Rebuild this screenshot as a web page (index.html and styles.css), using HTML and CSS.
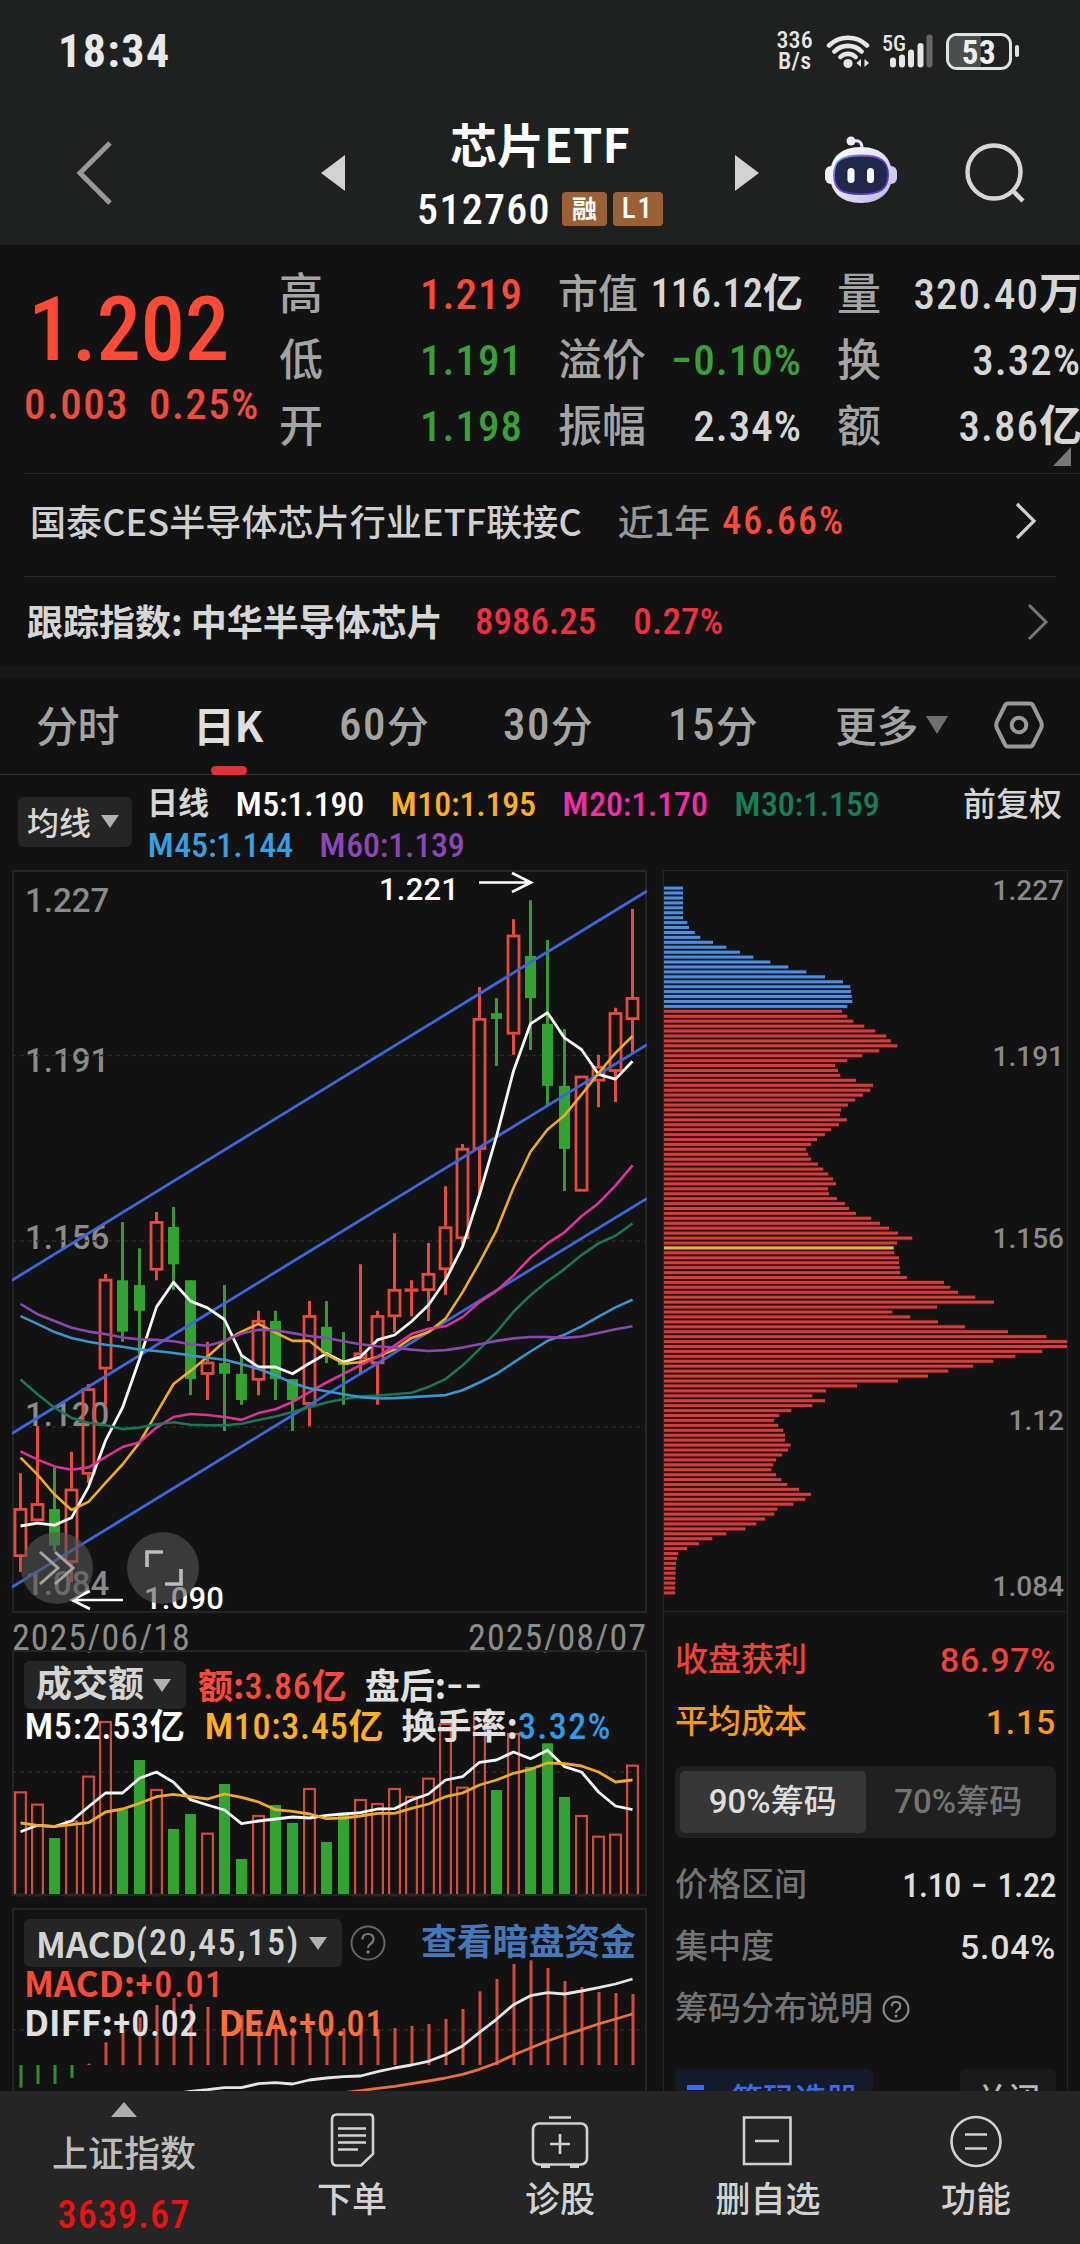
FILE: index.html
```html
<!DOCTYPE html>
<html lang="zh-CN">
<head>
<meta charset="utf-8">
<title>芯片ETF 512760</title>
<link rel="stylesheet" href="styles.css">
</head>
<body>
<header class="header">
  <div class="status">
    <span class="clock">18:34</span>
    <span class="net-speed">336<br>B/s</span>
    <svg class="wifi" width="45" height="36" viewBox="0 0 45 36">
      <g fill="none" stroke="#e6e6e6" stroke-width="4.6" stroke-linecap="round"><path d="M3 12.500a27 27 0 0 1 38 0M8.500 18.500a19 19 0 0 1 27 0M14.500 24a10.500 10.500 0 0 1 15 0"/></g>
      <circle cx="22" cy="30.500" r="4.600" fill="#e6e6e6"/><path d="M35 26v8l-4.500-4zM38.500 26v8l4.500-4z" fill="#e6e6e6"/>
    </svg>
    <svg class="signal" width="52" height="36" viewBox="0 0 52 36">
      <g stroke-width="6" stroke-linecap="round" stroke="#e6e6e6"><path d="M11 27.500v4M20 24.500v7M29 19.500v12M38.500 13v18.500"/><path d="M47.500 4.500v27" stroke="#666"/></g>
      <text x="0" y="18" class="signal-text" textLength="24" lengthAdjust="spacingAndGlyphs">5G</text>
    </svg>
    <span class="battery"><i class="battery-fill"></i><b>53</b></span><i class="battery-tip"></i>
  </div>
  <div class="titlebar">
    <svg class="back" width="40" height="66" viewBox="0 0 40 66"><path d="M35 3L5 33l30 30" fill="none" stroke="#999" stroke-width="5"/></svg>
    <svg class="prev" width="24" height="36" viewBox="0 0 24 36"><path d="M24 0v36L0 18z" fill="#d2d2d2"/></svg>
    <div class="title">
      <h1>芯片ETF</h1>
      <div class="code"><span class="num">512760</span><span class="badge">融</span><span class="badge badge-l1">L1</span></div>
    </div>
    <svg class="next" width="24" height="36" viewBox="0 0 24 36"><path d="M0 0v36l24-18z" fill="#d2d2d2"/></svg>
    <svg class="robot" width="72" height="68" viewBox="0 0 72 68">
      <defs>
        <linearGradient id="shell" x1="0" y1="0" x2="1" y2="1"><stop offset="0" stop-color="#fff"/><stop offset=".5" stop-color="#e6e2f8"/><stop offset="1" stop-color="#b9b2f0"/></linearGradient>
        <linearGradient id="rim" x1="0" y1="0" x2="1" y2="1"><stop offset="0" stop-color="#59b8e8"/><stop offset=".4" stop-color="#8a3fd8"/><stop offset=".7" stop-color="#3a35c8"/><stop offset="1" stop-color="#7a40e0"/></linearGradient>
      </defs>
      <path d="M27 5.500q10-3 10 7" fill="none" stroke="#e8e4fa" stroke-width="3"/><circle cx="26" cy="5" r="4.500" fill="#eeeafc"/>
      <rect x="0" y="30" width="12" height="18" rx="6" fill="#f1eefc"/><rect x="60" y="30" width="12" height="18" rx="6" fill="#cfc9f6"/>
      <path d="M36 11c21 0 31 12 31 28S56 67 36 67 5 56 5 39 15 11 36 11z" fill="url(#shell)"/>
      <path d="M36 19.500c19 0 27 5 27 19.500S55 58 36 58 9 54 9 39s8-19.500 27-19.500z" fill="#202849" stroke="url(#rim)" stroke-width="1.800"/>
      <rect x="22.500" y="32" width="7" height="15" rx="3.500" fill="#fff"/><rect x="42" y="32" width="7" height="15" rx="3.500" fill="#fff"/>
    </svg>
    <svg class="search" width="64" height="64" viewBox="0 0 64 64"><circle cx="29" cy="30" r="26.500" fill="none" stroke="#d6d6d6" stroke-width="4.400"/><path d="M48 49l10 10" stroke="#d6d6d6" stroke-width="4.500"/></svg>
  </div>
</header>

<main class="content">
  <section class="quote">
    <div class="last">
      <div class="price num">1.202</div>
      <div class="change num"><span>0.003</span><span>0.25%</span></div>
    </div>
    <dl class="stats">
      <div><dt>高</dt><dd class="up">1.219</dd></div>
      <div><dt>低</dt><dd class="down">1.191</dd></div>
      <div><dt>开</dt><dd class="down">1.198</dd></div>
    </dl>
    <dl class="stats">
      <div class="tight"><dt>市值</dt><dd>116.12<b>亿</b></dd></div>
      <div><dt>溢价</dt><dd class="down">−0.10%</dd></div>
      <div><dt>振幅</dt><dd>2.34%</dd></div>
    </dl>
    <dl class="stats">
      <div><dt>量</dt><dd>320.40<b>万</b></dd></div>
      <div><dt>换</dt><dd>3.32%</dd></div>
      <div><dt>额</dt><dd>3.86<b>亿</b></dd></div>
    </dl>
    <i class="more-corner"></i>
  </section>

  <section class="link-row fund">
    <span>国泰CES半导体芯片行业ETF联接C</span><span class="period">近1年</span><span class="num up">46.66%</span>
    <svg class="chev" width="22" height="40" viewBox="0 0 22 40"><path d="M2 3l17 17L2 37" fill="none" stroke="#d0d0d0" stroke-width="3.200"/></svg>
  </section>
  <section class="link-row index">
    <span>跟踪指数: 中华半导体芯片</span><span class="num">8986.25</span><span class="num">0.27%</span>
    <svg class="chev" width="22" height="40" viewBox="0 0 22 40"><path d="M2 3l17 17L2 37" fill="none" stroke="#777" stroke-width="3"/></svg>
  </section>

  <nav class="tabs">
    <span class="tab t1">分时</span>
    <span class="tab t2 active">日K</span>
    <span class="tab t3"><em>60</em>分</span>
    <span class="tab t4"><em>30</em>分</span>
    <span class="tab t5"><em>15</em>分</span>
    <span class="tab t6">更多<i class="caret"></i></span>
    <svg class="gear" width="50" height="48" viewBox="0 0 50 48"><path d="M14 2.500h22q2 0 3 2l8 16q1.500 3.500 0 7l-8 16q-1 2-3 2H14q-2 0-3-2l-8-16q-1.500-3.500 0-7l8-16q1-2 3-2z" fill="none" stroke="#999" stroke-width="4"/><circle cx="25" cy="24" r="7.300" fill="none" stroke="#999" stroke-width="4"/></svg>
  </nav>

  <section class="legend">
    <span class="pill ma-pill">均线<i class="caret"></i></span>
    <div class="ma">
      <div><span class="day">日线</span><span class="m5"><b>M</b>5:1.190</span><span class="m10"><b>M</b>10:1.195</span><span class="m20"><b>M</b>20:1.170</span><span class="m30"><b>M</b>30:1.159</span></div>
      <div><span class="m45"><b>M</b>45:1.144</span><span class="m60"><b>M</b>60:1.139</span></div>
    </div>
    <span class="adjust">前复权</span>
  </section>

  <div class="panels">
    <div class="left">
      <div class="kline">
        <div class="axis kaxis"><span>1.227</span><span>1.191</span><span>1.156</span><span>1.120</span><span>1.084</span></div>
        <svg id="kline" width="635" height="743" viewBox="12 870 635 743"></svg>
        <span class="mark mark-high">1.221</span>
        <span class="mark mark-low">1.090</span>
        <span class="round round-a"><svg width="72" height="72" viewBox="0 0 72 72"><path d="M19 20l18 16-18 16M34 20l18 16-18 16" fill="none" stroke="#a5a5a5" stroke-width="3"/></svg></span>
        <span class="round round-b"><svg width="72" height="72" viewBox="0 0 72 72"><path d="M20 35V20h16M38 52h16V37" fill="none" stroke="#bbb" stroke-width="3.600"/></svg></span>
      </div>
      <div class="dates"><span>2025/06/18</span><span>2025/08/07</span></div>
      <div class="sub volume">
        <svg id="volume" width="635" height="247" viewBox="12 1650 635 247"></svg>
        <div class="sub-head">
          <div class="line"><span class="pill vol-pill">成交额<i class="caret"></i></span><span class="v-amt"><b>额:</b>3.86<b>亿</b></span><span class="v-after"><b>盘后:</b>−−</span></div>
          <div class="line line2"><span><b>M</b>5:2.53<b>亿</b></span><span class="m10 v-m10"><b>M</b>10:3.45<b>亿</b></span><span class="v-rate"><b>换手率:</b><em>3.32%</em></span></div>
        </div>
      </div>
      <div class="sub macd">
        <svg id="macd" width="635" height="190" viewBox="12 1908 635 190"></svg>
        <div class="sub-head">
          <div class="line"><span class="pill"><b>MACD</b>(20,45,15)<i class="caret"></i></span>
            <svg class="help" width="36" height="36" viewBox="0 0 36 36"><circle cx="18" cy="18" r="16.500" fill="none" stroke="#666" stroke-width="2"/><path d="M12.500 14.500q0-5.500 5.500-5.500t5.500 5q0 3-3 5-2.500 1.500-2.500 4" fill="none" stroke="#777" stroke-width="2.200"/><circle cx="18" cy="27" r="1.800" fill="#777"/></svg>
            <span class="dark-pool">查看暗盘资金</span></div>
          <div class="line line2"><span class="macd-v"><b>MACD:</b>+0.01</span></div>
          <div class="line line3"><span><b>DIFF:</b>+0.02</span><span class="dea"><b>DEA:</b>+0.01</span></div>
        </div>
      </div>
    </div>

    <div class="chips">
      <div class="chip-chart">
        <svg id="chips" width="403" height="741" viewBox="664 871 403 741"></svg>
        <div class="axis caxis"><span>1.227</span><span>1.191</span><span>1.156</span><span>1.12</span><span>1.084</span></div>
      </div>
      <div class="chip-info">
        <div class="row profit"><span>收盘获利</span><span>86.97%</span></div>
        <div class="row cost"><span>平均成本</span><span>1.15</span></div>
        <div class="toggle"><span class="on">90%筹码</span><span>70%筹码</span></div>
        <div class="row"><span>价格区间</span><span class="num range">1.10 − 1.22</span></div>
        <div class="row"><span>集中度</span><span>5.04%</span></div>
        <div class="row"><span class="explain">筹码分布说明<svg width="28" height="28" viewBox="0 0 36 36"><circle cx="18" cy="18" r="16" fill="none" stroke="#888" stroke-width="2.800"/><path d="M12.500 14.500q0-5.500 5.500-5.500t5.500 5q0 3-3 5-2.500 1.500-2.500 4" fill="none" stroke="#888" stroke-width="2.800"/><circle cx="18" cy="27" r="2" fill="#888"/></svg></span></div>
        <div class="buttons">
          <span class="btn pick"><svg width="20" height="30" viewBox="0 0 20 30"><path d="M0 2.500h17M0 11h12M0 20h17" stroke="#3f6be8" stroke-width="5"/></svg>筹码选股</span>
          <span class="btn close">关闭</span>
        </div>
      </div>
    </div>
  </div>
</main>

<footer class="nav">
  <div class="nav-index"><i class="up-caret"></i><span>上证指数</span><b>3639.67</b></div>
  <div class="nav-item"><svg width="60" height="56" viewBox="0 0 60 56"><g fill="none" stroke="#d2d2d2" stroke-width="2.600"><path d="M11 2.500h34q3 0 3 4V42L36 53.500H12q-5 0-5-5v-41q0-5 5-5z" transform="translate(3 0)"/><path d="M16 16.500h28M16 23.500h28M16 30.500h28M16 37.500h20"/></g></svg><span>下单</span></div>
  <div class="nav-item"><svg width="60" height="56" viewBox="0 0 60 56"><g fill="none" stroke="#d2d2d2" stroke-width="2.600"><rect x="3" y="11.500" width="54" height="41" rx="6"/><path d="M19 5.500h22M30 22v20M20 32h20"/><path d="M11 54.500h9M40 54.500h9" stroke-width="3"/></g></svg><span>诊股</span></div>
  <div class="nav-item"><svg width="60" height="56" viewBox="0 0 60 56"><g fill="none" stroke="#d2d2d2" stroke-width="2.600"><path d="M6 5.500h46.500v46.500H6zM17 29h24"/></g></svg><span>删自选</span></div>
  <div class="nav-item"><svg width="60" height="56" viewBox="0 0 60 56"><g fill="none" stroke="#d2d2d2" stroke-width="2.600"><circle cx="30" cy="29.500" r="24.500"/><path d="M19 22.500h22M19 36.500h22"/></g></svg><span>功能</span></div>
</footer>
<script src="charts.js"></script>
</body>
</html>
```
FILE: charts.js
```js
const RED = '#e64c3c', GREEN = '#31a331', GRID = '#2a2a2a';
const STEP = 17, FIRST = 20.5;
const xAt = i => FIRST + i * STEP;
const r1 = v => Math.round(v * 10) / 10;

function polyline(values, yOf, color, width, start = 0) {
  const pts = values.map((v, i) => xAt(i + start) + ',' + r1(yOf(v))).join(' ');
  return `<polyline points="${pts}" fill="none" stroke="${color}" stroke-width="${width}" stroke-linejoin="round"/>`;
}
function dashed(y) {
  return `<line x1="12" x2="647" y1="${y}" y2="${y}" stroke="${GRID}" stroke-width="1.4" stroke-dasharray="4 4"/>`;
}

/* Daily candles: colour, high, body top, body bottom, low */
const candles = [
  ['r',1265,1337,1438,1469],['r',1168,1327,1364,1364],['g',1253,1339,1414,1426],['r',1221,1297,1450,1490],
  ['r',1081,1090,1268,1285],['r',854,864,1051,1124],['g',747,867,973,994],['g',801,877,930,1020],
  ['r',726,745,847,867],['g',716,757,834,887],['g',867,867,1071,1104],['r',994,1035,1062,1114],
  ['g',877,1038,1060,1178],['g',1024,1060,1114,1124],['r',930,949,1074,1104],['g',930,951,1071,1114],
  ['g',1071,1071,1114,1178],['r',910,939,1124,1168],['g',910,963,1018,1038],['g',974,1036,1042,1124],
  ['r',834,1016,1030,1060],['r',930,939,1040,1124],['r',770,885,943,974],['r',867,884,890,941],
  ['r',790,852,889,951],['r',673,756,846,897],['r',586,594,782,792],['r',262,326,598,690],
  ['g',285,316,328,425],['r',122,154,360,402],['g',83,198,285,392],['g',165,338,466,508],
  ['g',349,466,596,683],['r',445,445,684,684],['r',402,425,457,510],['r',305,314,437,499],['r',101,283,330,400]
];
const averages = [
  ['#f8f8f8',2.8,[1374,1368,1372,1357,1293,1198,1130,1030,922,871,910,924,948,1022,1046,1046,1060,1038,1018,1036,1025,990,980,952,918,867,798,690,570,435,338,315,367,391,442,452,415]],
  ['#f0aa28',2.6,[1233,1268,1309,1341,1324,1285,1247,1202,1141,1081,1054,1025,993,973,957,975,992,992,1020,1039,1036,1025,1010,986,974,946,892,830,764,676,602,556,527,484,440,398,363]],
  ['#dc3399',2.6,[1220,1237,1251,1258,1253,1232,1211,1201,1171,1149,1143,1145,1149,1155,1141,1133,1118,1098,1078,1060,1042,1025,1002,978,967,962,943,912,889,857,820,791,768,735,708,672,630]],
  ['#18765a',2.6,[1072,1102,1130,1151,1161,1166,1174,1171,1164,1160,1165,1166,1166,1163,1155,1148,1139,1129,1119,1112,1107,1105,1102,1099,1087,1071,1043,1009,974,932,898,869,844,815,791,775,750]],
  ['#3795d0',2.6,[941,957,974,986,994,1000,1004,1010,1013,1017,1022,1027,1031,1040,1050,1063,1079,1090,1096,1102,1108,1111,1110,1108,1106,1104,1094,1078,1060,1037,1014,992,979,962,942,923,907]],
  ['#8848b0',2.6,[916,937,951,965,973,978,985,989,990,993,999,1002,992,977,969,970,976,982,986,993,999,1003,1006,1010,1013,1011,1006,999,992,987,984,984,986,983,976,968,962]]
];
const kY = v => 860 + v / 2.063;

function drawKline() {
  let s = dashed(1055.5) + dashed(1241) + dashed(1427);
  candles.forEach(([c, hi, top, bot, lo], i) => {
    const x = xAt(i), t = kY(top), b = kY(bot);
    if (c === 'g') {
      s += `<rect x="${x - 1.5}" y="${kY(hi)}" width="3" height="${kY(lo) - kY(hi)}" fill="#3b963a"/>`;
      s += `<rect x="${x - 5.5}" y="${t}" width="11" height="${b - t}" fill="${GREEN}"/>`;
    } else {
      s += `<path d="M${x} ${kY(hi)}V${t}M${x} ${b}V${kY(lo)}" stroke="${RED}" stroke-width="3"/>`;
      s += `<rect x="${x - 5.5}" y="${t + 1.3}" width="11" height="${Math.max(b - t - 2.6, .6)}" fill="none" stroke="${RED}" stroke-width="2.8"/>`;
    }
  });
  [[867, 64], [1183, 381], [1500, 698]].forEach(([a, b]) => {
    s += `<line x1="12" y1="${kY(a)}" x2="647" y2="${kY(b)}" stroke="#3c66dd" stroke-width="2.8"/>`;
  });
  averages.forEach(([c, w, v]) => { s += polyline(v, kY, c, w); });
  s += '<path d="M479 882.500h52M512 873l19 9.500-19 9.500M123 1600H72M90 1591l-18 9 18 9" fill="none" stroke="#fff" stroke-width="2.600"/>';
  document.getElementById('kline').innerHTML = s;
}

const volumes = [577,614,714,664,530,366,628,480,570,687,642,701,552,777,648,615,669,567,726,638,600,612,567,591,536,372,563,340,570,402,501,430,591,648,710,704,497];
const volumeColors = 'rrgrrrggrggrggrggrggrrrrrrrrgrgggrrrr';
const volM5 = [695,676,680,663,620,579,579,535,516,547,599,615,630,671,663,657,651,654,646,642,638,627,626,600,582,540,530,487,480,456,476,451,500,516,576,618,629];
const volM10 = [669,676,679,674,668,636,627,610,590,583,590,597,582,592,606,629,634,642,656,654,648,640,640,625,612,590,579,555,540,520,508,489,491,498,516,546,540];
const pY = v => 1600 + v / 3;

function drawVolume() {
  let s = dashed(1772);
  volumes.forEach((v, i) => {
    const x = xAt(i), y = pY(v);
    s += volumeColors[i] === 'g'
      ? `<rect x="${x - 5.5}" y="${y}" width="11" height="${1895 - y}" fill="${GREEN}"/>`
      : `<rect x="${x - 5.4}" y="${y}" width="10.8" height="${1895 - y}" fill="none" stroke="#d44a3b" stroke-width="2.2"/>`;
  });
  s += polyline(volM5, pY, '#f8f8f8', 2.8) + polyline(volM10, pY, '#f0aa28', 2.8);
  document.getElementById('volume').innerHTML = s;
}

const macdBars = [1463,1452,1452,1434,1391,1327,1290,1252,1215,1194,1212,1221,1232,1245,1260,1270,1284,1281,1285,1285,1287,1288,1284,1278,1272,1257,1227,1174,1137,1092,1081,1104,1143,1161,1176,1179,1182];
const diff = [1482,1474,1469,1463,1463,1451,1448,1452,1440,1434,1430,1428,1415,1404,1395,1384,1364,1338,1297,1258,1214,1187,1178,1182,1173,1163,1152,1137];
const dea = [1478,1472,1465,1459,1451,1443,1434,1423,1408,1389,1365,1344,1323,1305,1289,1272,1257,1242];

function drawMacd() {
  let s = dashed(2030);
  macdBars.forEach((v, i) => {
    s += `<line x1="${xAt(i) + .5}" x2="${xAt(i) + .5}" y1="2065" y2="${pY(v)}" stroke="${v > 1395 ? '#348a30' : '#d24a3b'}" stroke-width="3"/>`;
  });
  s += polyline(diff, pY, '#e6e6e6', 2.8, 9) + polyline(dea, pY, '#e8703c', 2.8, 19);
  document.getElementById('macd').innerHTML = s;
}

/* Chip distribution: bar lengths from the highest price to the lowest */
const chips = [98,98,98,98,98,98,98,111,116,133,150,188,228,269,309,360,414,468,524,578,600,602,604,606,591,
  575,591,609,642,675,708,722,741,687,636,591,555,563,570,617,668,660,638,615,593,572,569,590,566,542,524,500,482,467,474,482,503,519,534,548,557,533,536,560,584,596,617,663,689,716,743,786,740,730,
  732,746,746,748,750,770,881,899,923,975,1031,860,726,780,863,944,1073,1188,1250,1251,1176,1095,1029,968,894,833,743,620,527,486,524,486,423,387,371,384,399,404,404,421,413,395,377,369,363,377,393,411,446,482,465,429,381,372,344,318,285,228,186,146,110,84,80,77,76,76,75,75,75,75];

function drawChips() {
  let s = '';
  chips.forEach((v, i) => {
    const y = 888.1 + i * 4.929, w = (v - 41) / 3;
    const [c, d] = i === 73 ? ['#f0b830', '#3a2a10'] : i < 25 ? ['#528fd8', '#0c1c38'] : ['#cc403d', '#3e0d0d'];
    s += `<rect x="664" y="${r1(y - 2.4)}" width="${r1(w)}" height="5" fill="${d}"/><rect x="664" y="${r1(y - 1.5)}" width="${r1(w)}" height="3" fill="${c}"/>`;
  });
  document.getElementById('chips').innerHTML = s;
}

drawKline();
drawVolume();
drawMacd();
drawChips();
```
FILE: styles.css
```css
* { box-sizing: border-box; margin: 0; padding: 0; }
i, em { font-style: normal; }
body { width: 1080px; height: 2244px; overflow: hidden; background: #121212; color: #d6d6d6; display: flex; flex-direction: column; font-family: "Noto Sans CJK SC", sans-serif; font-weight: 500; white-space: nowrap; }
svg { display: block; flex: none; }
.num { font-family: "Roboto Condensed", "Noto Sans CJK SC", sans-serif; font-weight: 500; }
.up { color: #f94b38; }
.down { color: #38a038; }

.header { height: 245px; flex: none; background: #1f2120; }
.status { height: 103px; display: flex; align-items: center; padding: 0 68px 1px 58px; }
.clock { font: 700 46px/1 "Roboto Condensed", sans-serif; letter-spacing: 1.4px; color: #e8e8e8; margin-right: auto; }
.net-speed { font: 500 24px/21px "Roboto Condensed", sans-serif; text-align: center; letter-spacing: .2px; color: #e6e6e6; margin-right: 13px; }
.wifi { margin-right: 11px; }
.signal { margin-right: 12px; overflow: visible; }
.signal-text { font: 500 22px "Roboto Condensed", sans-serif; fill: #e6e6e6; }
.battery { position: relative; width: 66px; height: 37px; border: 3px solid #dfe3e1; border-radius: 11px; display: grid; place-items: center; overflow: hidden; background: #1f2120; }
.battery-fill { position: absolute; left: 0; top: 0; width: 53%; height: 100%; background: #4c4e4d; }
.battery b { position: relative; font: 700 33px/1 "Roboto Condensed", sans-serif; letter-spacing: .6px; color: #f0f0f0; }
.battery-tip { width: 4px; height: 12px; border-radius: 2px; background: #dfe3e1; margin-left: 3px; margin-right: -7px; }
.titlebar { height: 142px; display: flex; align-items: flex-start; padding-left: 75px; }
.back { margin-top: 37px; }
.prev { margin: 52px 0 0 206px; }
.title { width: 390px; display: flex; flex-direction: column; align-items: center; }
h1 { font-size: 47px; font-weight: 700; line-height: 60px; color: #fff; margin-top: 10px; letter-spacing: 0; }
.code { display: flex; align-items: center; gap: 6px; margin-top: 18px; height: 36px; }
.code .num { font-size: 42px; color: #fff; letter-spacing: 1.3px; margin-right: 5px; }
.badge { height: 34px; width: 45px; border-radius: 4px; background: #9c6034; color: #fff; font-size: 25px; line-height: 30px; text-align: center; font-weight: 700; }
.badge-l1 { width: 50px; font: 500 29px/33px "Roboto Condensed", sans-serif; letter-spacing: 2px; }
.next { margin-top: 52px; }
.robot { margin: 33px 0 0 66px; }
.search { margin: 39px 0 0 68px; }

.content { height: 1846px; flex: none; overflow: hidden; }
.quote { position: relative; height: 229px; display: grid; grid-template-columns: 243px 241px 241px 241px; column-gap: 38px; padding-top: 15px; }
.quote::after { content: ""; position: absolute; left: 24px; right: 0; bottom: 0; height: 1px; background: #262626; }
.last { color: #ff4a35; margin-right: -38px; }
.price { font-size: 89px; line-height: 100px; margin: 20px 0 0 28px; letter-spacing: -.4px; }
.change { display: flex; font-size: 43px; line-height: 50px; margin: -1px 0 0 24px; letter-spacing: 1.4px; color: #ee4c3c; }
.change span { width: 125px; }
.stats > div { height: 66px; display: flex; justify-content: space-between; align-items: center; }
dt { font-size: 44px; color: #a4a4a4; margin: -5px 0 0 -2px; }
dd { font: 500 43px/66px "Roboto Condensed", "Noto Sans CJK SC", sans-serif; letter-spacing: 1px; margin-right: -1px; padding-top: 1px; }
dd b { font-size: 43px; line-height: 1; font-weight: 700; letter-spacing: -1px; }
.tight dt { font-size: 40px; }
.tight dd { font-size: 40px; letter-spacing: .2px; }
.tight dd b { font-size: 40px; }
.more-corner { position: absolute; right: 9px; bottom: 8px; border-left: 18px solid transparent; border-bottom: 19px solid #777; }

.link-row { display: flex; align-items: center; padding: 0 32px; font-size: 36px; }
.link-row > span:not(.num) { margin-top: -3px; }
.fund { height: 103px; padding: 0 32px 9px 30px; position: relative; color: #d0d0d0; }
.fund > span:first-child { letter-spacing: .1px; }
.fund::after { content: ""; position: absolute; left: 24px; right: 24px; bottom: 0; height: 1px; background: #262626; }
.period { color: #969696; margin: 0 12px 0 36px; }
.link-row .num { font-size: 38px; letter-spacing: 2px; }
.chev { margin-left: auto; }
.fund .chev { margin-right: 11px; }
.index { height: 89px; font-weight: 700; padding-left: 27px; }
.index .num { color: #f03040; font-size: 37px; margin-left: 32px; letter-spacing: 0; }
.index .num + .num { margin-left: 37px; letter-spacing: .2px; }
.index .chev { margin-right: -1px; }

.tabs { height: 109px; border-top: 12px solid #161616; border-bottom: 1px solid #333; display: flex; align-items: center; position: relative; font-size: 42px; color: #a4a4a4; padding: 0 36px 2px 36px; }
.tab { display: flex; align-items: center; letter-spacing: -.5px; position: relative; height: 95px; padding-bottom: 4px; }
.tab em { font-family: "Roboto Condensed", sans-serif; font-size: 45px; line-height: 60px; letter-spacing: 1.4px; padding-top: 3px; font-weight: 500; }
.t1 { width: 157px; }
.t2 { width: 146px; }
.t3 { width: 164px; }
.t4 { width: 165px; }
.t5 { width: 167px; }
.t6 { flex: 1; }
.active { color: #dedede; font-weight: 700; }
.active::after { content: ""; position: absolute; left: 18px; bottom: -2px; width: 36px; height: 9px; border-radius: 5px; background: #e33034; }
.caret { width: 0; height: 0; border: 9px solid transparent; border-top: 13px solid #b0b0b0; border-bottom: 0; }
.t6 .caret { border-width: 18px 11px 0; border-top-color: #707070; margin-left: 8px; margin-top: 3px; }

.legend { display: flex; height: 95px; padding-left: 18px; }
.pill { display: inline-flex; align-items: center; border-radius: 6px; background: #252525; }
.ma-pill { width: 114px; height: 50px; margin-top: 22px; padding-left: 9px; padding-bottom: 2px; font-size: 32px; flex: none; }
.ma-pill .caret { margin-left: 10px; }
.ma { padding: 8px 0 0 15px; width: 831px; }
.ma > div { height: 41px; display: flex; align-items: center; gap: 26px; font: 500 34px/41px "Roboto Condensed", "Noto Sans CJK SC", sans-serif; letter-spacing: -.2px; }
.ma b, .line b { font-family: "Noto Sans CJK SC", sans-serif; font-weight: 700; letter-spacing: 0; }
.ma b { font-size: 32px; }
.day { font-size: 31px; letter-spacing: 0; font-weight: 700; }
.m5 { color: #fff; } .m10 { color: #ffb020; } .m20 { color: #ee2fa6; } .m30 { color: #158058; } .m45 { color: #3a9fe0; } .m60 { color: #8d46b5; }
.adjust { font-size: 33px; line-height: 41px; margin-top: 7px; }

.panels { display: flex; }
.left { width: 635px; margin-left: 12px; }
.kline { position: relative; height: 743px; outline: 2px solid #252525; outline-offset: -2px; }
.axis { position: absolute; font: 500 33px/1 Roboto, sans-serif; color: #8a8a8a; letter-spacing: 0; }
.axis span { position: absolute; transform: translateY(-50%); }
.kaxis { left: 13px; top: 0; }
.kaxis span:nth-child(1) { top: 30px; } .kaxis span:nth-child(2) { top: 190px; } .kaxis span:nth-child(3) { top: 367px; } .kaxis span:nth-child(4) { top: 544px; } .kaxis span:nth-child(5) { top: 713px; }
#kline { position: relative; }
.mark { position: absolute; font: 500 31px/1 Roboto, sans-serif; color: #fff; letter-spacing: .2px; }
.mark-high { left: 367px; top: 4px; }
.mark-low { left: 132px; top: 713px; }
.round { position: absolute; top: 662px; width: 72px; height: 72px; border-radius: 50%; background: rgba(85, 85, 85, .6); }
.round-a { left: 9px; } .round-b { left: 115px; }
.dates { display: flex; justify-content: space-between; height: 37px; font: 400 36px/50px "Roboto Condensed", sans-serif; color: #8c8c8c; letter-spacing: 1px; }
.sub { position: relative; outline: 2px solid #252525; outline-offset: -2px; }
.volume { height: 246px; }
.macd { height: 220px; margin-top: 12px; }
.sub-head { position: absolute; left: 0; top: 11px; width: 100%; font: 500 36px/40px "Roboto Condensed", "Noto Sans CJK SC", sans-serif; letter-spacing: .8px; color: #e0e0e0; }
.line { display: flex; align-items: center; padding-left: 12px; height: 48px; }
.line b { font-size: 35px; }
.line .pill { height: 48px; padding-left: 12px; width: 162px; color: #d4d4d4; letter-spacing: 0; }
.vol-pill { font-weight: 700; }
.line .pill .caret { margin-left: 9px; }
.v-amt { color: #f94b38; margin-left: 12px; }
.v-after { margin-left: 18px; }
.line2 { height: 32px; padding-left: 12px; color: #fff; }
.v-m10 { margin-left: 19px; }
.v-rate { margin-left: 18px; color: #e0e0e0; }
.v-rate em { color: #2f9bea; letter-spacing: 1.4px; }
.macd .line .pill { width: 318px; letter-spacing: 1.7px; }
.help { margin-left: 8px; }
.dark-pool { margin-left: 35px; color: #4478b8; letter-spacing: -.2px; font-weight: 700; }
.macd-v { color: #f94b38; letter-spacing: 1.6px; }
.line3 { padding-left: 12px; height: 46px; }
.dea { margin-left: 20px; color: #ff7038; }

.chips { width: 405px; margin-left: 16px; height: 1300px; border: 1px solid #252525; }
.chip-chart { position: relative; height: 741px; border-bottom: 1px solid #252525; }
.caxis { right: 3px; top: 0; font-size: 28px; letter-spacing: 0; }
.caxis span { right: 0; }
.caxis span:nth-child(1) { top: 20px; } .caxis span:nth-child(2) { top: 186px; } .caxis span:nth-child(3) { top: 368px; } .caxis span:nth-child(4) { top: 550px; } .caxis span:nth-child(5) { top: 716px; }
.chip-info { padding: 17px 11px 0 11px; font: 500 33px/62px Roboto, "Noto Sans CJK SC", sans-serif; color: #747474; }
.row { display: flex; justify-content: space-between; height: 62px; }
.row > span:nth-child(2) { color: #dedede; font-size: 34px; letter-spacing: .7px; }
.row > .range:nth-child(2) { font-size: 34px; letter-spacing: -.5px; word-spacing: 3px; font-weight: 500; }
.chip-info .profit { color: #ee4339; }
.chip-info .cost { color: #f59a1c; }
.chip-info .profit > span, .chip-info .cost > span { color: inherit; }
.toggle { display: flex; height: 72px; margin: 13px 0 16px 0; border-radius: 8px; background: #202020; padding: 5px; line-height: 62px; text-align: center; }
.toggle span { flex: 1; border-radius: 5px; }
.toggle .on { background: #373737; color: #dedede; }
.explain { display: flex; align-items: center; gap: 9px; }
.buttons { display: flex; justify-content: space-between; margin-top: 29px; }
.btn { height: 70px; border-radius: 6px; font-size: 32px; line-height: 62px; padding: 0 16px; }
.pick { width: 198px; background: #141a2c; color: #3f6be8; display: flex; gap: 24px; padding-left: 12px; }
.pick svg { margin-top: 16px; }
.close { width: 96px; background: #1a1a1a; color: #b8b8b8; }

.nav { height: 153px; display: flex; background: #252525; }
.nav-index { width: 248px; display: flex; flex-direction: column; align-items: center; color: #bcbcbc; font-size: 36px; }
.up-caret { border: 13px solid transparent; border-bottom: 15px solid #adadad; border-top: 0; margin-top: 11px; }
.nav-index span { line-height: 50px; margin-top: 9px; }
.nav-index b { font: 500 38px/50px "Roboto Condensed", sans-serif; color: #ee1111; letter-spacing: 1.2px; margin-top: 14px; }
.nav-item { width: 208px; display: flex; flex-direction: column; align-items: center; font-size: 35px; line-height: 50px; color: #d2d2d2; padding-top: 21px; }
.nav-item span { margin-top: 4px; }
```
